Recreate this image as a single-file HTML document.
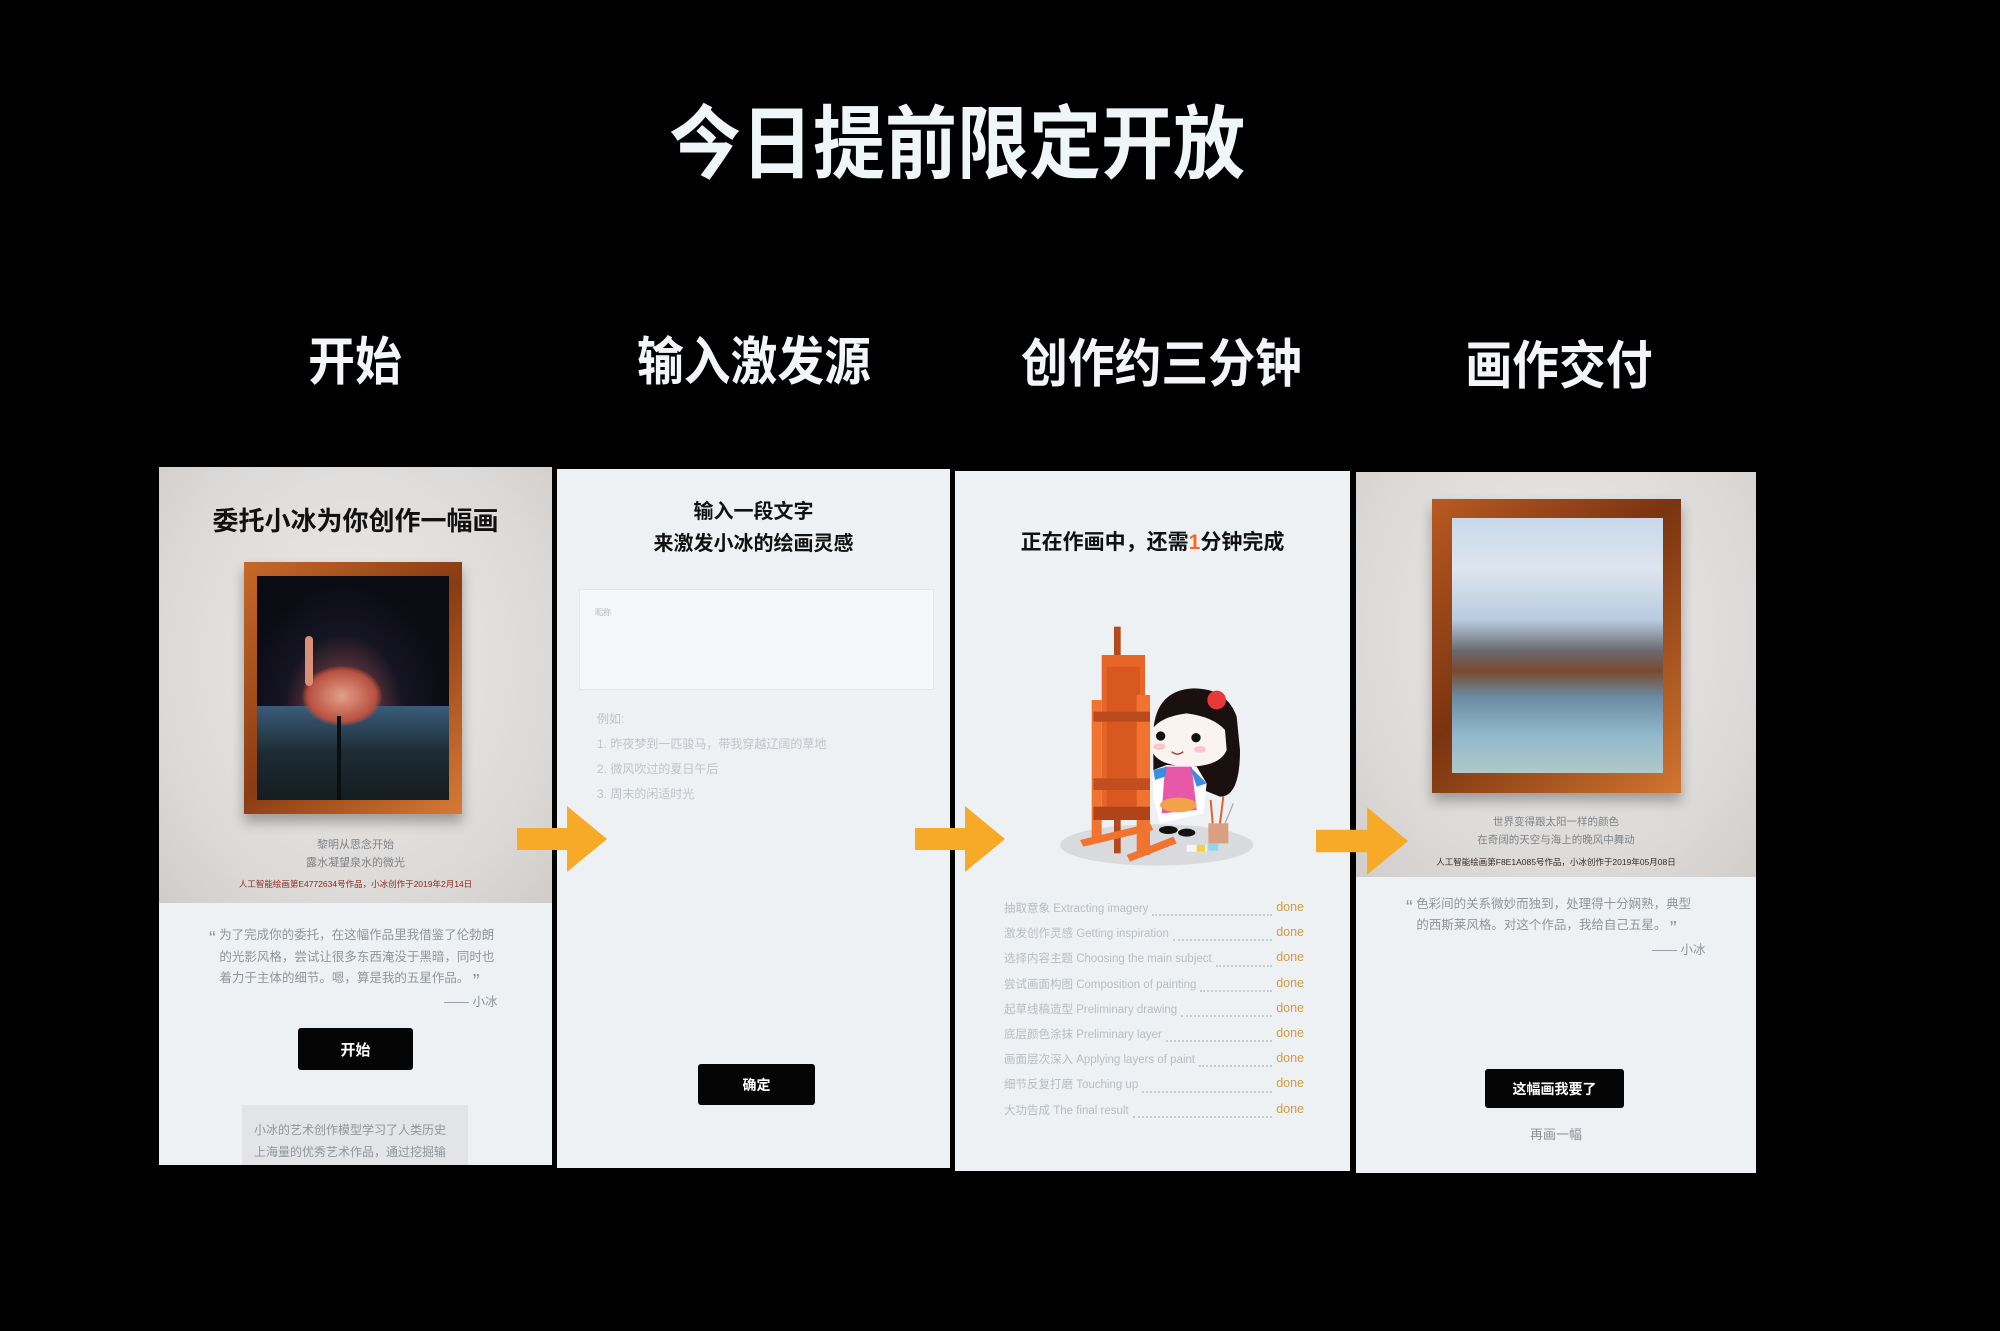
<!DOCTYPE html>
<html><head><meta charset="utf-8"><style>
*{margin:0;padding:0;box-sizing:border-box}
body{width:2000px;height:1331px;background:#000;position:relative;overflow:hidden;font-family:"Liberation Sans","Noto Sans CJK SC",sans-serif}
.a{position:absolute}
.c{text-align:center;white-space:nowrap}
.h{color:#f2f6f8;font-weight:bold;font-size:52px;transform:scaleX(.9)}
.p{background:#eef1f3}
.btn{background:#050505;color:#fff;font-weight:bold;border-radius:3px;display:flex;align-items:center;justify-content:center}
.g{color:#9ea4a8}
.lst div{height:25.2px;display:flex;font-size:11.5px;color:#b7bdc2;white-space:nowrap}
.lst .d{flex:1;border-bottom:2px dotted #c6ccd0;margin:0 4px 9px}
.lst .o{color:#d69a40;font-size:12.5px}
.q{font-size:20px;line-height:10px;vertical-align:-6px}
</style></head><body>
<div class="a c" style="left:0;width:1914px;top:80px;color:#eef6f8;font-weight:bold;font-size:80px;transform:scaleX(.9);transform-origin:957px 0">今日提前限定开放</div>
<div class="a c h" style="left:255px;width:200px;top:320px">开始</div>
<div class="a c h" style="left:604px;width:300px;top:320px">输入激发源</div>
<div class="a c h" style="left:1006px;width:300px;top:322px">创作约三分钟</div>
<div class="a c h" style="left:1409px;width:300px;top:324px">画作交付</div>

<!-- panel 1 -->
<div class="a" style="left:159px;top:467px;width:393px;height:698px;background:#eef1f3;overflow:hidden">
 <div class="a" style="left:0;top:0;width:393px;height:436px;background:radial-gradient(ellipse at 50% 45%,#ecebea 0%,#dcdad8 70%,#cfccca 100%)"></div>
 <div class="a c" style="left:0;width:393px;top:34px;font-size:26px;font-weight:bold;color:#111">委托小冰为你创作一幅画</div>
 <div class="a" style="left:85px;top:95px;width:218px;height:252px;background:linear-gradient(135deg,#c8692a,#8a3c12 50%,#d77a35);box-shadow:0 8px 12px rgba(0,0,0,.3);padding:14px 13px">
  <div style="width:100%;height:100%;background:radial-gradient(ellipse at 45% 60%,#c0705a 0%,#6d3a40 15%,#161522 40%,#0b0b14 70%),#0b0b14;position:relative;overflow:hidden">
   <div class="a" style="left:0;top:130px;width:100%;height:94px;background:linear-gradient(180deg,#3a5c7a,#1d2c34 50%,#141c20)"></div>
   <div class="a" style="left:45px;top:90px;width:80px;height:60px;border-radius:50%;background:radial-gradient(#e3a08a,#b85040 60%,transparent 72%)"></div>
   <div class="a" style="left:48px;top:60px;width:8px;height:50px;border-radius:4px;background:#d89078"></div>
   <div class="a" style="left:80px;top:140px;width:4px;height:84px;background:#0a0f12"></div>
  </div>
 </div>
 <div class="a c g" style="left:0;width:393px;top:369px;font-size:11px;line-height:18px;color:#7e8286">黎明从思念开始<br>露水凝望泉水的微光</div>
 <div class="a c" style="left:0;width:393px;top:411px;font-size:8.5px;color:#8a2a1c">人工智能绘画第E4772634号作品，小冰创作于2019年2月14日</div>
 <div class="a" style="left:50px;top:458px;width:310px;font-size:12.5px;line-height:21.5px;color:#8f959a"><span class="q">“</span> 为了完成你的委托，在这幅作品里我借鉴了伦勃朗<br>&nbsp;&nbsp;&nbsp;的光影风格，尝试让很多东西淹没于黑暗，同时也<br>&nbsp;&nbsp;&nbsp;着力于主体的细节。嗯，算是我的五星作品。 <span class="q">”</span></div>
 <div class="a" style="left:285px;top:524px;font-size:12.5px;color:#8f959a">—— 小冰</div>
 <div class="a btn" style="left:139px;top:561px;width:115px;height:42px;font-size:15px">开始</div>
 <div class="a" style="left:83px;top:638px;width:226px;height:70px;background:#e2e4e6;padding:14px 12px;font-size:12px;line-height:22px;color:#8f959a">小冰的艺术创作模型学习了人类历史上海量的优秀艺术作品，通过挖掘输</div>
</div>

<!-- panel 2 -->
<div class="a p" style="left:557px;top:469px;width:393px;height:699px">
 <div class="a c" style="left:0;width:393px;top:27px;font-size:20px;font-weight:bold;color:#111;line-height:32px">输入一段文字<br>来激发小冰的绘画灵感</div>
 <div class="a" style="left:22px;top:120px;width:355px;height:101px;background:#f4f6f7;border:1px solid #e4e6e8"></div>
 <div class="a" style="left:38px;top:138px;font-size:8px;color:#b8bcc0">昵称</div>
 <div class="a" style="left:40px;top:238px;font-size:12px;line-height:25px;color:#bfc4c8">例如:<br>1. 昨夜梦到一匹骏马，带我穿越辽阔的草地<br>2. 微风吹过的夏日午后<br>3. 周末的闲适时光</div>
 <div class="a btn" style="left:141px;top:595px;width:117px;height:41px;font-size:14px">确定</div>
</div>

<!-- panel 3 -->
<div class="a p" style="left:955px;top:471px;width:395px;height:700px">
 <div class="a c" style="left:0;width:395px;top:55px;font-size:21px;font-weight:bold;color:#111">正在作画中，还需<span style="color:#f26a1b">1</span>分钟完成</div>
 <div class="a lst" style="left:49px;top:429px;width:300px">
  <div>抽取意象 Extracting imagery<span class="d"></span><span class="o">done</span></div>
  <div>激发创作灵感 Getting inspiration<span class="d"></span><span class="o">done</span></div>
  <div>选择内容主题 Choosing the main subject<span class="d"></span><span class="o">done</span></div>
  <div>尝试画面构图 Composition of painting<span class="d"></span><span class="o">done</span></div>
  <div>起草线稿造型 Preliminary drawing<span class="d"></span><span class="o">done</span></div>
  <div>底层颜色涂抹 Preliminary layer<span class="d"></span><span class="o">done</span></div>
  <div>画面层次深入 Applying layers of paint<span class="d"></span><span class="o">done</span></div>
  <div>细节反复打磨 Touching up<span class="d"></span><span class="o">done</span></div>
  <div>大功告成 The final result<span class="d"></span><span class="o">done</span></div>
 </div>
</div>
<svg class="a" style="left:1040px;top:610px" width="230" height="270" viewBox="0 0 690 810">
 <ellipse cx="350" cy="705" rx="290" ry="62" fill="#d9dadd"/>
 <rect x="222" y="50" width="20" height="680" fill="#b5481d"/>
 <rect x="185" y="135" width="130" height="470" fill="#e8652a"/>
 <rect x="200" y="170" width="100" height="420" fill="#d9581f"/>
 <rect x="155" y="270" width="30" height="420" fill="#f0732f"/>
 <rect x="290" y="255" width="40" height="480" fill="#f0732f"/>
 <rect x="160" y="305" width="170" height="30" fill="#b84a1e"/>
 <rect x="160" y="505" width="170" height="35" fill="#c04f20"/>
 <rect x="160" y="590" width="170" height="40" fill="#b04418"/>
 <polygon points="120,690 330,640 340,660 130,710" fill="#f0732f"/>
 <polygon points="260,735 400,680 410,700 270,755" fill="#f0732f"/>
 <path d="M340 360 Q350 240 460 235 Q560 235 590 320 L600 420 Q600 560 540 560 L340 480 Z" fill="#1a1010"/>
 <circle cx="530" cy="270" r="28" fill="#e8383a"/>
 <path d="M335 360 Q360 320 440 310 Q520 320 555 360 L560 420 Q540 470 440 470 Q350 465 335 420 Z" fill="#fbf3f0"/>
 <circle cx="362" cy="378" r="14" fill="#111"/><circle cx="468" cy="383" r="14" fill="#111"/>
 <ellipse cx="358" cy="410" rx="18" ry="10" fill="#f7c6cf"/><ellipse cx="480" cy="418" rx="18" ry="10" fill="#f7c6cf"/>
 <path d="M395 425 Q412 440 430 425" stroke="#a33" stroke-width="4" fill="none"/>
 <path d="M340 480 L380 465 L470 470 L500 520 L490 610 L360 640 L340 560 Z" fill="#fff"/>
 <path d="M375 470 L455 470 L470 600 L365 610 Z" fill="#e858a8"/>
 <path d="M340 480 L380 470 L375 500 L345 510 Z" fill="#3a8ee0"/><path d="M450 470 L500 520 L470 530 Z" fill="#3a8ee0"/>
 <ellipse cx="415" cy="585" rx="55" ry="22" fill="#f2a24a"/>
 <ellipse cx="385" cy="660" rx="28" ry="12" fill="#111"/><ellipse cx="440" cy="668" rx="26" ry="12" fill="#111"/>
 <rect x="505" y="640" width="60" height="60" fill="#d8a080"/>
 <line x1="518" y1="640" x2="512" y2="570" stroke="#e06030" stroke-width="6"/><line x1="540" y1="640" x2="550" y2="560" stroke="#e06030" stroke-width="6"/><line x1="555" y1="640" x2="580" y2="580" stroke="#aaa" stroke-width="4"/>
 <rect x="440" y="705" width="60" height="20" fill="#f5f5f5"/><rect x="470" y="705" width="25" height="20" fill="#f4d03f"/><rect x="505" y="700" width="30" height="22" fill="#8ed8e8"/>
</svg>

<!-- panel 4 -->
<div class="a" style="left:1356px;top:472px;width:400px;height:701px;background:#eef1f3;overflow:hidden">
 <div class="a" style="left:0;top:0;width:400px;height:405px;background:radial-gradient(ellipse at 50% 40%,#ecebea 0%,#dcdad8 70%,#d0cdcb 100%)"></div>
 <div class="a" style="left:76px;top:27px;width:249px;height:294px;background:linear-gradient(135deg,#b95a22,#7a3410 45%,#d27530);box-shadow:0 8px 12px rgba(0,0,0,.3);padding:19px 18px 20px 20px">
  <div style="width:100%;height:100%;background:linear-gradient(180deg,#c8d8ea 0%,#dde5ee 20%,#b8cbe0 40%,#6a6a70 52%,#7a4a30 60%,#6a8aa0 70%,#90b8cc 85%,#b0c8c8 100%)"></div>
 </div>
 <div class="a c" style="left:0;width:400px;top:341px;font-size:10.5px;line-height:18px;color:#7e8286">世界变得跟太阳一样的颜色<br>在奇阔的天空与海上的晚风中舞动</div>
 <div class="a c" style="left:0;width:400px;top:384px;font-size:8.5px;color:#3a2a22">人工智能绘画第F8E1A085号作品，小冰创作于2019年05月08日</div>
 <div class="a" style="left:50px;top:422px;width:320px;font-size:12.5px;line-height:21px;color:#8f959a"><span class="q">“</span> 色彩间的关系微妙而独到，处理得十分娴熟，典型<br>&nbsp;&nbsp;&nbsp;的西斯莱风格。对这个作品，我给自己五星。 <span class="q">”</span></div>
 <div class="a" style="left:296px;top:467px;font-size:12.5px;color:#8f959a">—— 小冰</div>
 <div class="a btn" style="left:129px;top:597px;width:139px;height:39px;font-size:14px">这幅画我要了</div>
 <div class="a c" style="left:0;width:400px;top:652px;font-size:13px;color:#8a8f94">再画一幅</div>
</div>

<!-- arrows -->
<svg class="a" style="left:517px;top:806px" width="90" height="66" viewBox="0 0 90 66"><path d="M0 22 H50 V0 L90 33 L50 66 V44 H0 Z" fill="#f7a928"/></svg>
<svg class="a" style="left:915px;top:806px" width="90" height="66" viewBox="0 0 90 66"><path d="M0 22 H50 V0 L90 33 L50 66 V44 H0 Z" fill="#f7a928"/></svg>
<svg class="a" style="left:1316px;top:807px" width="92" height="68" viewBox="0 0 90 66"><path d="M0 22 H50 V0 L90 33 L50 66 V44 H0 Z" fill="#f7a928"/></svg>
</body></html>
